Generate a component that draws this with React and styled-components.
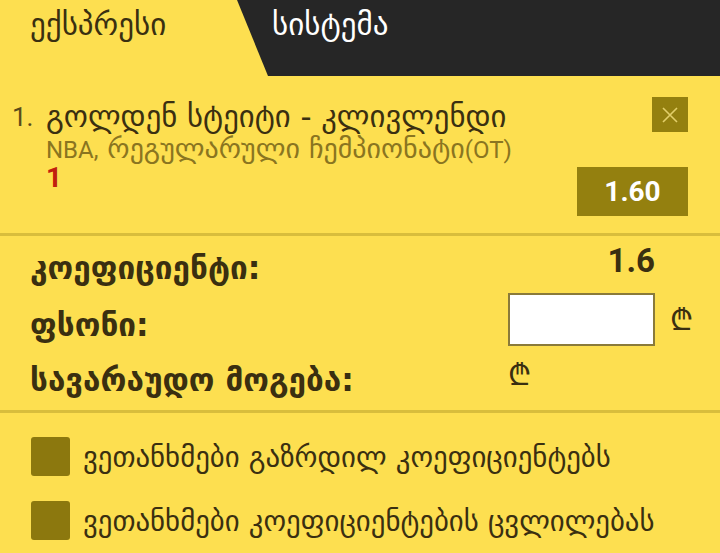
import React from 'react';
import styled, { createGlobalStyle } from 'styled-components';

const GlobalStyle = createGlobalStyle`
  html, body {
    margin: 0;
    padding: 0;
    background: #fddf50;
    font-family: "DejaVu Sans", "Noto Sans", sans-serif;
  }
`;

const Page = styled.div`
  width: 720px;
  height: 553px;
  overflow: hidden;
  background: #fddf50;
  color: #3a2f10;
`;

const TabBar = styled.div`
  display: flex;
  height: 76px;
  background: #262626;
`;

const Tab = styled.div`
  width: ${p => p.$width}px;
  padding: 7px 0 0 ${p => p.$pad}px;
  box-sizing: border-box;
  font-size: 31px;
  line-height: 34px;
  color: ${p => (p.$active ? '#3a2f10' : '#ffffff')};
  background: ${p => (p.$active ? '#fddf50' : 'transparent')};
  clip-path: ${p => (p.$active ? 'polygon(0 0, 237px 0, 268px 100%, 0 100%)' : 'none')};
`;

const Bet = styled.div`
  display: flex;
  padding: 21px 32px 17px 12px;
  border-bottom: 3px solid #d8bd3c;
`;

const Num = styled.div`
  font-family: Roboto, sans-serif;
  font-size: 26px;
  line-height: 34px;
  width: 34px;
  padding-top: 3px;
  color: #5a4b1a;
`;

const Info = styled.div`
  flex: 1;
  display: flex;
  flex-direction: column;
  padding-top: 3px;
`;

const Title = styled.div`
  font-size: 30.7px;
  line-height: 34px;
  color: #3a2f10;
  white-space: nowrap;
`;

const Sub = styled.div`
  font-size: 28px;
  line-height: 30px;
  color: #8a7520;
  white-space: nowrap;
  span { font-family: Roboto, sans-serif; font-size: 24px; }
`;

const Pick = styled.div`
  font-family: Roboto, sans-serif;
  font-weight: 700;
  font-size: 28px;
  color: #c0200e;
  line-height: 26px;
`;

const Side = styled.div`
  display: flex;
  flex-direction: column;
  align-items: flex-end;
  justify-content: space-between;
  height: 119px;
`;

const Close = styled.div`
  width: 36px;
  height: 35px;
  background: #94800f;
  display: flex;
  align-items: center;
  justify-content: center;
`;

const Odds = styled.div`
  width: 111px;
  height: 49px;
  background: #94800f;
  color: #fff;
  font-family: Roboto, sans-serif;
  font-weight: 700;
  font-size: 28px;
  display: flex;
  align-items: center;
  justify-content: center;
`;

const Summary = styled.div`
  display: grid;
  grid-template-columns: 478px 147px 1fr;
  grid-template-rows: 57px 53px 64px;
  padding-left: 30px;
  border-bottom: 3px solid #d8bd3c;
  align-items: center;
`;

const Label = styled.div`
  font-weight: 700;
  font-size: 31.5px;
  line-height: 34px;
  color: #3a2f10;
  white-space: nowrap;
  margin-top: ${p => p.$mt || 0}px;
`;

const Value = styled.div`
  font-family: Roboto, sans-serif;
  font-weight: 700;
  font-size: 33px;
  line-height: 33px;
  color: #3a2f10;
  text-align: right;
  align-self: start;
  margin-top: 8px;
`;

const Input = styled.input`
  width: 147px;
  height: 53px;
  box-sizing: border-box;
  border: 2px solid #8a7a3a;
  background: #fff;
  outline: none;
`;

const Lari = styled.span`
  font-family: "DejaVu Sans", sans-serif;
  font-weight: 200;
  font-size: 30px;
  line-height: 30px;
  color: #3a2f10;
  padding-left: ${p => p.$pad || 0}px;
  margin-top: ${p => p.$mt || 0}px;
`;

const Checks = styled.div`
  display: flex;
  flex-direction: column;
  gap: 25px;
  padding: 24px 0 0 31px;
`;

const CheckRow = styled.label`
  display: flex;
  align-items: center;
  gap: 13px;
  font-size: 28.8px;
  color: #3a2f10;
  white-space: nowrap;
`;

const Box = styled.span`
  width: 39px;
  height: 39px;
  border-radius: 3px;
  background: #8c780e;
  flex-shrink: 0;
`;

export default function App() {
  return (
    <Page>
      <GlobalStyle />
      <TabBar>
        <Tab $active $width={268} $pad={30}>ექსპრესი</Tab>
        <Tab $width={300} $pad={4}>სისტემა</Tab>
      </TabBar>
      <Bet>
        <Num>1.</Num>
        <Info>
          <Title>გოლდენ სტეიტი - კლივლენდი</Title>
          <Sub><span>NBA,</span> რეგულარული ჩემპიონატი<span>(OT)</span></Sub>
          <Pick>1</Pick>
        </Info>
        <Side>
          <Close>
            <svg width="18" height="18" viewBox="0 0 18 18">
              <path d="M2 2 L16 16 M16 2 L2 16" stroke="#e3cf6a" strokeWidth="1.6" />
            </svg>
          </Close>
          <Odds>1.60</Odds>
        </Side>
      </Bet>
      <Summary>
        <Label $mt={6}>კოეფიციენტი:</Label>
        <Value>1.6</Value>
        <span />
        <Label $mt={10}>ფსონი:</Label>
        <Input type="text" />
        <Lari $pad={15}>₾</Lari>
        <Label $mt={4}>სავარაუდო მოგება:</Label>
        <Lari $mt={-6}>₾</Lari>
        <span />
      </Summary>
      <Checks>
        <CheckRow><Box />ვეთანხმები გაზრდილ კოეფიციენტებს</CheckRow>
        <CheckRow><Box />ვეთანხმები კოეფიციენტების ცვლილებას</CheckRow>
      </Checks>
    </Page>
  );
}
